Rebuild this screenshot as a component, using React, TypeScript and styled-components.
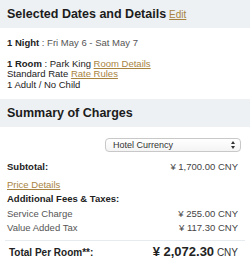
import * as React from 'react';
import styled, {createGlobalStyle} from 'styled-components';

const GlobalStyle = createGlobalStyle`
  body {
    margin: 0;
    background: #fff;
    font-family: 'Liberation Sans', Arial, sans-serif;
    color: #222;
  }
`;

const Page = styled.div`
  width: 250px;
  height: 262px;
  overflow: hidden;
`;

const SectionHeader = styled.div`
  display: flex;
  align-items: baseline;
  gap: 3px;
  height: 28px;
  padding: 0 7px;
  box-sizing: border-box;
  background: #edf1f4;
  line-height: 28px;
`;

const Title = styled.h2`
  margin: 0;
  font-size: 12.5px;
  font-weight: bold;
  color: #1c1c1c;
`;

const Link = styled.a<{$small?: boolean}>`
  color: #a8833f;
  text-decoration: underline;
  font-size: ${p => (p.$small ? 10 : 9.5)}px;
  cursor: pointer;
`;

const Details = styled.div`
  padding: 10px 7px 9px;
  font-size: 9.5px;
  line-height: 10.5px;
`;

const Block = styled.div`
  & + & {
    margin-top: 10px;
  }
`;

const Strong = styled.b`
  font-weight: bold;
`;

const Muted = styled.span`
  color: #555;
`;

const Summary = styled.div`
  padding: 11px 7px 0;
  font-size: 9.5px;
`;

const SelectRow = styled.div`
  display: flex;
  justify-content: flex-end;
  padding-right: 2px;
  margin-bottom: 8px;
`;

const Select = styled.div`
  display: flex;
  align-items: center;
  justify-content: space-between;
  width: 136px;
  height: 14px;
  box-sizing: border-box;
  padding: 0 5px 0 7px;
  border: 1px solid #c8c8c8;
  border-radius: 4px;
  background: linear-gradient(#fff, #f4f4f4);
  font-size: 9px;
  color: #333;
`;

const Row = styled.div<{$muted?: boolean; $bold?: boolean; $gap?: number}>`
  display: flex;
  justify-content: space-between;
  align-items: baseline;
  padding: 0 5px 0 0;
  margin-top: ${p => p.$gap ?? 0}px;
  line-height: 14.5px;
  color: ${p => (p.$muted ? '#555' : '#222')};
  font-weight: ${p => (p.$bold ? 'bold' : 'normal')};
`;

const Amount = styled.span`
  font-weight: normal;
  color: #444;
`;

const Divider = styled.hr`
  margin: 4px -2px 0;
  border: 0;
  border-top: 1px solid #e6ebf0;
`;

const TotalRow = styled.div`
  display: flex;
  justify-content: space-between;
  align-items: baseline;
  padding: 3px 5px 0 2px;
  font-size: 10px;
  font-weight: bold;
`;

const TotalAmount = styled.span`
  font-size: 13px;
  font-weight: bold;
  color: #222;
`;

const Currency = styled.span`
  font-size: 10px;
  font-weight: normal;
  color: #333;
`;

const Arrows = () => (
  <svg width="4" height="8" viewBox="0 0 4 8">
    <path d="M0 3 L2 0 L4 3 Z M0 5 L2 8 L4 5 Z" fill="#333" />
  </svg>
);

export default function App() {
  return (
    <Page>
      <GlobalStyle />
      <SectionHeader>
        <Title>Selected Dates and Details</Title>
        <Link $small>Edit</Link>
      </SectionHeader>
      <Details>
        <Block>
          <Strong>1 Night</Strong> <Muted>: Fri May 6 - Sat May 7</Muted>
        </Block>
        <Block>
          <div>
            <Strong>1 Room</Strong> : Park King <Link>Room Details</Link>
          </div>
          <div>
            Standard Rate <Link>Rate Rules</Link>
          </div>
          <div>1 Adult / No Child</div>
        </Block>
      </Details>
      <SectionHeader>
        <Title>Summary of Charges</Title>
      </SectionHeader>
      <Summary>
        <SelectRow>
          <Select>
            <span>Hotel Currency</span>
            <Arrows />
          </Select>
        </SelectRow>
        <Row $bold>
          <span>Subtotal:</span>
          <Amount>¥ 1,700.00 CNY</Amount>
        </Row>
        <Row $gap={3}>
          <Link>Price Details</Link>
        </Row>
        <Row $bold>
          <span>Additional Fees &amp; Taxes:</span>
        </Row>
        <Row $muted>
          <span>Service Charge</span>
          <Amount>¥ 255.00 CNY</Amount>
        </Row>
        <Row $muted>
          <span>Value Added Tax</span>
          <Amount>¥ 117.30 CNY</Amount>
        </Row>
        <Divider />
        <TotalRow>
          <span>Total Per Room**:</span>
          <span>
            <TotalAmount>¥ 2,072.30</TotalAmount> <Currency>CNY</Currency>
          </span>
        </TotalRow>
      </Summary>
    </Page>
  );
}
